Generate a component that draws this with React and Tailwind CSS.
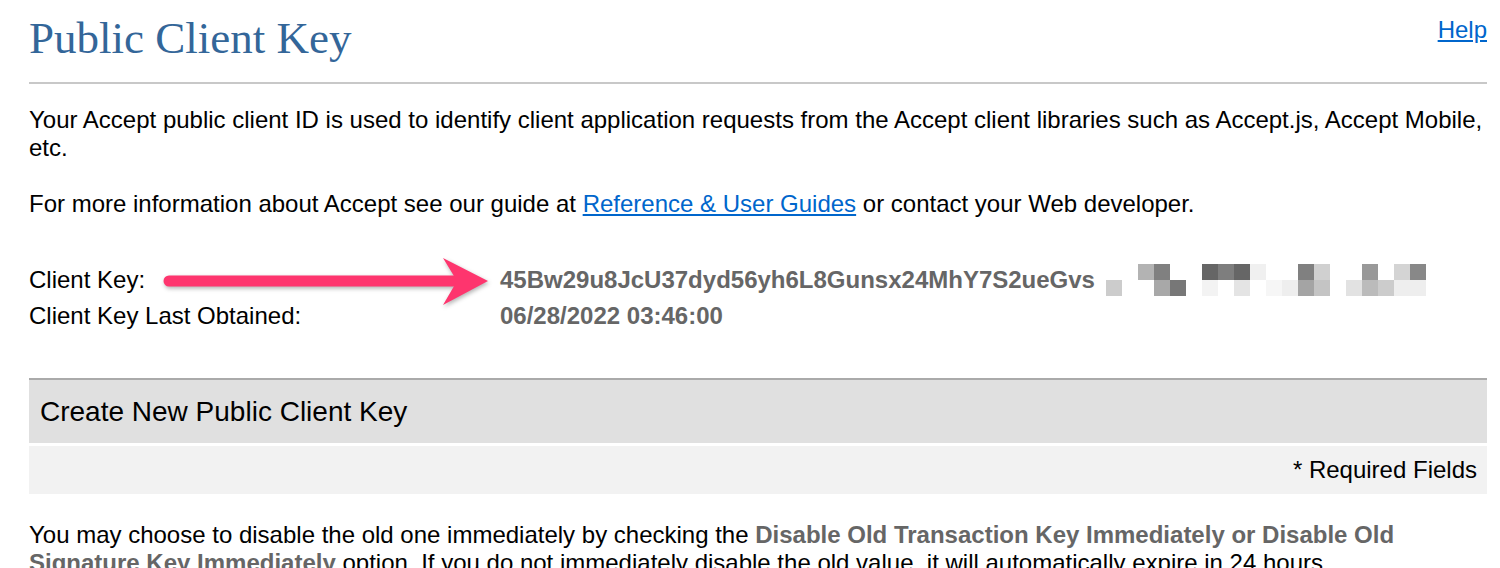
import React from "react";

const topCells = [
  [2, "#b3b3b3"], [3, "#808080"], [6, "#666666"], [7, "#7e7e7e"], [8, "#666666"],
  [9, "#f0f0f0"], [12, "#808080"], [13, "#d0d0d0"], [16, "#999999"], [18, "#d4d4d4"], [19, "#888888"],
];
const bottomCells = [
  [0, "#cccccc"], [3, "#a8a8a8"], [4, "#777777"], [6, "#f3f3f3"], [8, "#e4e4e4"],
  [10, "#f6f6f6"], [11, "#eeeeee"], [12, "#a4a4a4"], [13, "#c4c4c4"], [15, "#e2e2e2"],
  [16, "#bbbbbb"], [17, "#cccccc"], [18, "#eeeeee"], [19, "#eeeeee"],
];

// pixelated (redacted) part of the key
function Pixelated() {
  return (
    <svg width="320" height="32" viewBox="0 0 320 32" className="ml-[11px] shrink-0">
      {topCells.map(([c, fill]) => (
        <rect key={"t" + c} x={c * 16} y="0" width="16" height="16" fill={fill} />
      ))}
      {bottomCells.map(([c, fill]) => (
        <rect key={"b" + c} x={c * 16} y="16" width="16" height="16" fill={fill} />
      ))}
    </svg>
  );
}

function Arrow() {
  return (
    <svg
      width="330"
      height="50"
      viewBox="0 0 330 50"
      className="absolute left-[134px] top-[-4px] drop-shadow-[1px_2px_2px_rgba(0,0,0,0.3)]"
    >
      <line x1="6" y1="23" x2="292" y2="23" stroke="#fe356e" strokeWidth="11" strokeLinecap="round" />
      <polygon points="280,0 325,23 280,47 294,23" fill="#fe356e" />
    </svg>
  );
}

export default function App() {
  return (
    <div className="w-[1500px] pl-[29px] pr-[13px] bg-white text-black font-['Liberation_Sans',Arial,sans-serif] text-[24px] leading-[28px]">
      {/* header */}
      <div className="flex justify-between items-start pt-[12px] h-[82px]">
        <h1 className="font-['Liberation_Serif',Georgia,serif] text-[45px] leading-[52px] text-[#336699] font-normal">
          Public Client Key
        </h1>
        <a href="#" className="text-[#0066cc] underline mt-[4px]">
          Help
        </a>
      </div>
      <div className="h-[2px] bg-[#c8c8c8]" />

      <p className="mt-[22px]">
        Your Accept public client ID is used to identify client application requests from the Accept client libraries such as Accept.js, Accept Mobile, etc.
      </p>
      <p className="mt-[28px]">
        For more information about Accept see our guide at{" "}
        <a href="#" className="text-[#0066cc] underline">Reference &amp; User Guides</a> or contact your Web developer.
      </p>

      {/* key info */}
      <div className="relative mt-[44px]">
        <div className="flex items-center h-[36px]">
          <div className="w-[471px] shrink-0">Client Key:</div>
          <div className="font-bold text-[#666666]">45Bw29u8JcU37dyd56yh6L8Gunsx24MhY7S2ueGvs</div>
          <Pixelated />
        </div>
        <div className="flex items-center h-[36px]">
          <div className="w-[471px] shrink-0">Client Key Last Obtained:</div>
          <div className="font-bold text-[#666666]">06/28/2022 03:46:00</div>
        </div>
        <Arrow />
      </div>

      {/* create new key section */}
      <div className="mt-[44px] border-t-2 border-[#aaaaaa]">
        <div className="h-[63px] bg-[#e0e0e0] flex items-center pl-[11px] text-[28px]">
          Create New Public Client Key
        </div>
        <div className="mt-[3px] h-[48px] bg-[#f2f2f2] flex items-center justify-end pr-[10px]">
          * Required Fields
        </div>
      </div>

      <p className="mt-[27px]">
        You may choose to disable the old one immediately by checking the{" "}
        <span className="font-bold text-[#666666]">Disable Old Transaction Key Immediately or Disable Old Signature Key Immediately</span>{" "}
        option. If you do not immediately disable the old value, it will automatically expire in 24 hours.
      </p>
    </div>
  );
}
